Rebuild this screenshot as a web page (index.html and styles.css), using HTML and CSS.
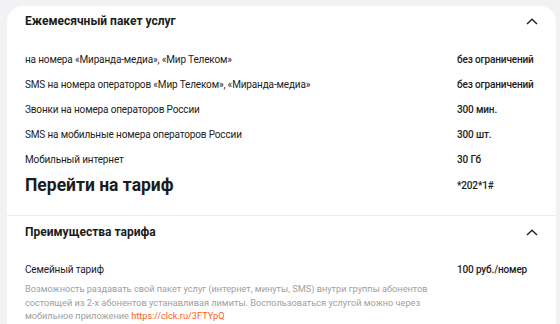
FILE: index.html
```html
<!DOCTYPE html>
<html lang="ru">
<head>
    <meta charset="UTF-8">
    <meta name="viewport" content="width=device-width, initial-scale=1.0">
    <title>Тариф</title>
    <link rel="stylesheet" href="styles.css">
</head>
<body>
    <div class="card">
        <div class="section">
            <div class="section-head">
                <h2>Ежемесячный пакет услуг</h2>
                <svg class="chevron" width="12" height="7" viewBox="0 0 12 7"><path d="M1 6L6 1.2L11 6" fill="none" stroke="#222" stroke-width="1.4"/></svg>
            </div>
            <div class="rows">
                <div class="row"><span>на номера «Миранда-медиа», «Мир Телеком»</span><span class="value">без ограничений</span></div>
                <div class="row"><span>SMS на номера операторов «Мир Телеком», «Миранда-медиа»</span><span class="value">без ограничений</span></div>
                <div class="row"><span>Звонки на номера операторов России</span><span class="value">300 мин.</span></div>
                <div class="row"><span>SMS на мобильные номера операторов России</span><span class="value">300 шт.</span></div>
                <div class="row"><span>Мобильный интернет</span><span class="value">30 Гб</span></div>
                <div class="row row-big"><span class="big">Перейти на тариф</span><span class="value">*202*1#</span></div>
            </div>
        </div>
        <div class="section section-second">
            <div class="section-head">
                <h2>Преимущества тарифа</h2>
                <svg class="chevron" width="12" height="7" viewBox="0 0 12 7"><path d="M1 6L6 1.2L11 6" fill="none" stroke="#222" stroke-width="1.4"/></svg>
            </div>
            <div class="rows">
                <div class="row"><span>Семейный тариф</span><span class="value">100 руб./номер</span></div>
                <p class="desc">Возможность раздавать свой пакет услуг (интернет, минуты, SMS) внутри группы абонентов состоящей из 2-х абонентов устанавливая лимиты. Воспользоваться услугой можно через мобильное приложение <a href="#">https://clck.ru/3FTYpQ</a><br><a href="#">Подробнее</a></p>
            </div>
        </div>
    </div>
</body>
</html>
```

FILE: styles.css
```css
body {
    margin: 0;
    background-color: #f2f2f4;
    font-family: Roboto, "Noto Sans", sans-serif;
    color: #1c1c1c;
}
.card {
    margin: 6px 4px 0 7px;
    background-color: white;
    border-radius: 16px;
    overflow: hidden;
}
.section {
    padding: 7px 18px 14px 18px;
}
.section-second {
    border-top: 1px solid #ececee;
    padding-top: 8px;
}
.section-head {
    display: flex;
    justify-content: space-between;
    align-items: center;
    height: 16px;
}
.section-head h2 {
    margin: 0;
    font-size: 12px;
    font-weight: 700;
    line-height: 16px;
}
.rows {
    margin-top: 18px;
}
.section-second .rows {
    margin-top: 17px;
}
.row {
    display: grid;
    grid-template-columns: 432px 1fr;
    height: 25px;
    line-height: 25px;
    font-size: 10px;
    letter-spacing: -0.15px;
    white-space: nowrap;
}
.value {
    font-weight: 500;
}
.row-big {
    height: 29px;
    line-height: 27px;
}
.big {
    font-size: 17.5px;
    font-weight: 700;
    letter-spacing: 0;
}
.desc {
    margin: 0;
    max-width: 410px;
    font-size: 9.2px;
    line-height: 13.5px;
    color: #a0a0a0;
}
.desc a {
    color: #ff5a24;
    text-decoration: none;
}
```
